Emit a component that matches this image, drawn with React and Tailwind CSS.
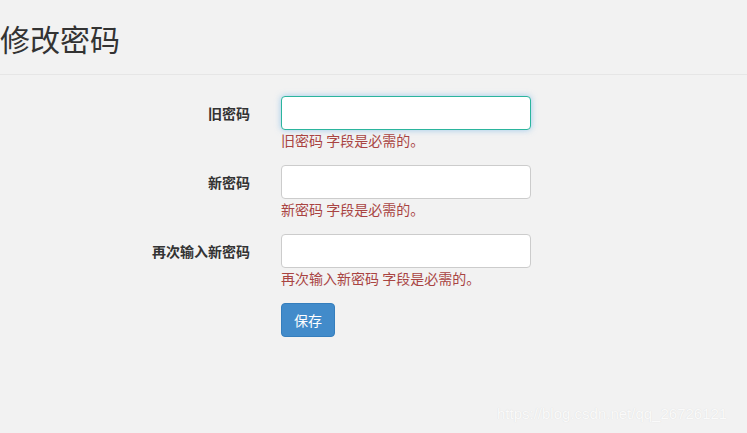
const font = { fontFamily: '"Noto Sans CJK SC", "Noto Sans", sans-serif' };

const fields = [
  { label: "旧密码", focused: true },
  { label: "新密码" },
  { label: "再次输入新密码" },
];

function Row({ label, focused }) {
  return (
    <div className="flex mb-[15px]">
      <div className="w-[250px] h-[34px] flex items-center justify-end text-[14px] font-bold text-[#333]">
        {label}
      </div>
      <div className="ml-[31px] w-[250px]">
        <input
          type="password"
          className={
            "block w-full h-[34px] bg-white rounded-[4px] outline-none px-3 border " +
            (focused
              ? "border-[#2bb59d] shadow-[0_0_6px_rgba(102,175,233,0.6)]"
              : "border-[#cccccc]")
          }
        />
        <div className="mt-[1px] text-[14px] leading-[19px] text-[#a94442]">
          {label} 字段是必需的。
        </div>
      </div>
    </div>
  );
}

export default function App() {
  return (
    <div className="w-[747px] h-[433px] bg-[#f2f2f2] relative overflow-hidden" style={font}>
      <div className="h-[75px] border-b border-[#e6e6e6] flex items-center">
        <h2 className="text-[30px] leading-[36px] text-[#333] mt-[1px]">修改密码</h2>
      </div>
      <div className="pt-[21px]">
        {fields.map((f) => (
          <Row key={f.label} {...f} />
        ))}
        <div className="ml-[281px] mt-[2px]">
          <button className="w-[54px] h-[34px] rounded-[4px] bg-[#428bca] border border-[#357ebd] text-white text-[14px]">
            保存
          </button>
        </div>
      </div>
      <div
        className="absolute left-[497px] top-[403px] text-[15px] text-[#fafafa]"
        style={{ fontFamily: '"Liberation Sans", Arial, sans-serif', textShadow: "0 0 1px #d8d8d8" }}
      >
        https://blog.csdn.net/qq_26726121
      </div>
    </div>
  );
}
